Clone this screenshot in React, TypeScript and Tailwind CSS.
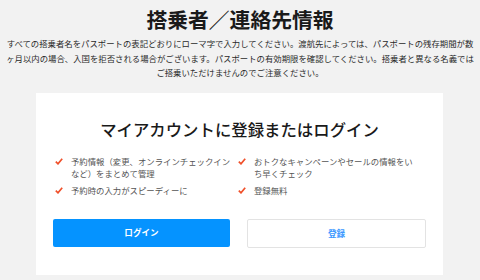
import React from "react";

const font = { fontFamily: '"Noto Sans CJK JP", "Noto Sans", sans-serif' };

function Check() {
  return (
    <svg width="8" height="7" viewBox="0 0 8 7" className="mt-[3px] shrink-0">
      <path d="M0.8 3.6 L3 5.8 L7.2 0.8" fill="none" stroke="#f0502a" strokeWidth="1.7" />
    </svg>
  );
}

function Bullet({ lines }: { lines: string[] }) {
  return (
    <li className="flex gap-[8px]">
      <Check />
      <span className="whitespace-nowrap">
        {lines.map((l, i) => (
          <React.Fragment key={i}>
            {i > 0 && <br />}
            {l}
          </React.Fragment>
        ))}
      </span>
    </li>
  );
}

export default function App() {
  return (
    <div className="h-[280px] w-[480px] overflow-hidden bg-[#f2f2f2] text-[#222]" style={font}>
      <h1 className="pt-[7px] text-center text-[20.8px] font-bold leading-[24px] text-[#1a1a1a]">
        搭乗者／連絡先情報
      </h1>
      <p className="mt-[5px] whitespace-nowrap text-center text-[8.4px] leading-[14.5px] text-[#2a2a2a]">
        すべての搭乗者名をパスポートの表記どおりにローマ字で入力してください。渡航先によっては、パスポートの残存期間が数
        <br />
        ヶ月以内の場合、入国を拒否される場合がございます。パスポートの有効期限を確認してください。搭乗者と異なる名義では
        <br />
        ご搭乗いただけませんのでご注意ください。
      </p>

      <section className="mx-[36px] mt-[13px] h-[182px] w-[407px] bg-white px-[17px] pt-[26px]">
        <h2 className="text-center text-[16.4px] font-medium leading-[20px] text-[#1a1a1a]">
          マイアカウントに登録またはログイン
        </h2>

        <div className="mt-[16px] grid grid-cols-[185px_1fr] text-[8.4px] leading-[12px] text-[#555]">
          <ul className="flex flex-col gap-[5px] pl-[2px]">
            <Bullet lines={["予約情報（変更、オンラインチェックイン", "など）をまとめて管理"]} />
            <Bullet lines={["予約時の入力がスピーディーに"]} />
          </ul>
          <ul className="flex flex-col gap-[5px]">
            <Bullet lines={["おトクなキャンペーンやセールの情報をい", "ち早くチェック"]} />
            <Bullet lines={["登録無料"]} />
          </ul>
        </div>

        <div className="mt-[23px] flex gap-[17px]">
          <button className="h-[28px] flex-1 rounded-[2px] bg-[#0593ff] text-[8.6px] font-bold text-white">
            ログイン
          </button>
          <button className="h-[29px] flex-1 rounded-[2px] border border-[#e3e3e3] bg-white text-[8.6px] font-bold text-[#3a98ff]">
            登録
          </button>
        </div>
      </section>
    </div>
  );
}
